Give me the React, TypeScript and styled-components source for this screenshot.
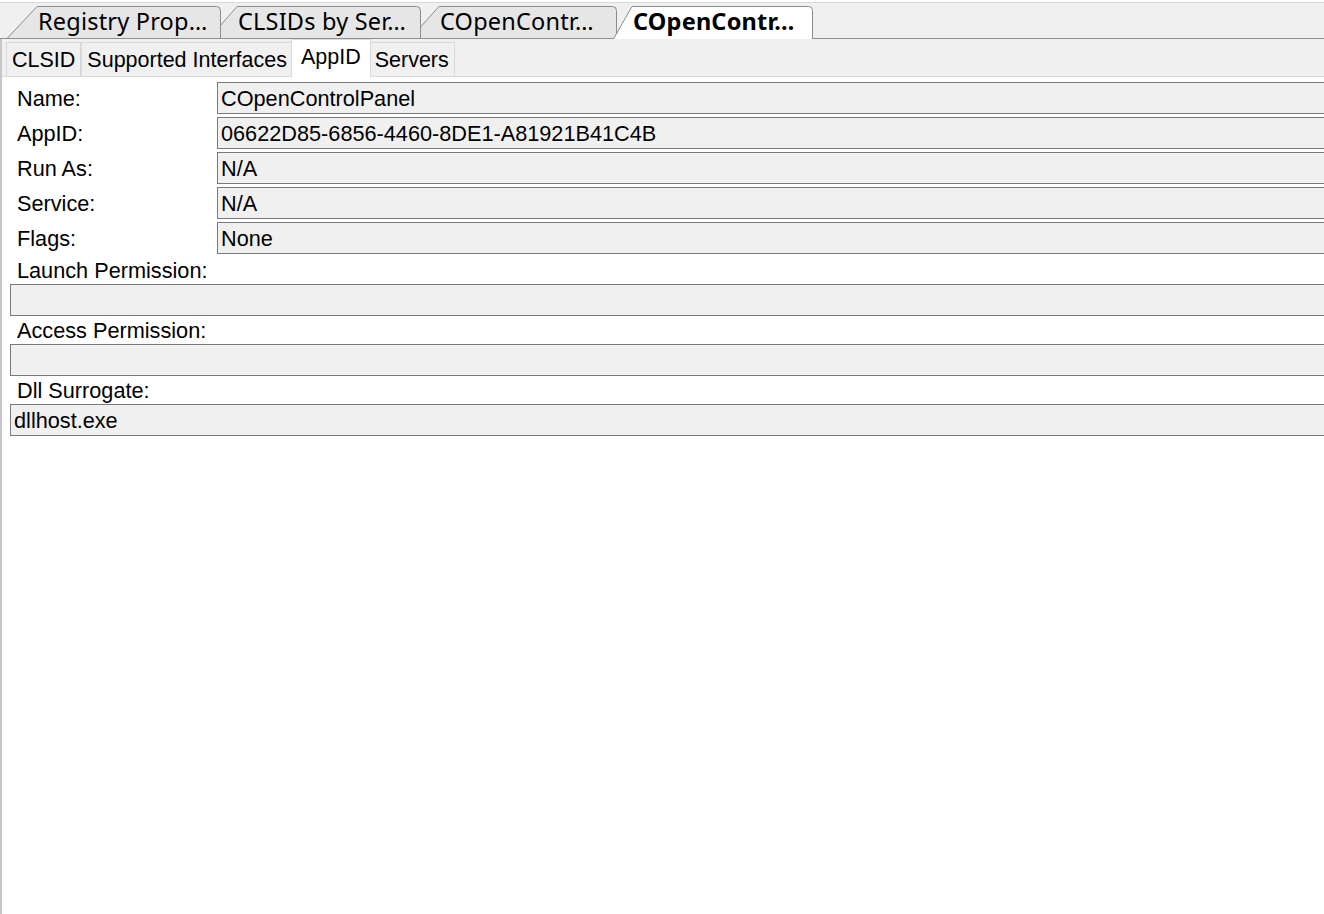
import React from "react";
import styled, { createGlobalStyle } from "styled-components";

const Global = createGlobalStyle`
  html, body, #root { margin: 0; padding: 0; height: 100%; }
  body { background: #ffffff; overflow: hidden; }
  * { box-sizing: border-box; }
`;

const Window = styled.div`
  display: flex;
  flex-direction: column;
  height: 100vh;
  width: 100vw;
  overflow: hidden;
  background: #ffffff;
`;

const TabBar = styled.div`
  margin-top: 2px;
  height: 37px;
  border-top: 1px solid #d9d9d9;
  border-bottom: 1px solid #8f8f8f;
  background: #f0f0f0;
  display: flex;
  align-items: flex-end;
  padding-left: 7px;
`;

const DocTab = styled.div<{ $w: number; $slant: number; $active?: boolean; $z: number; $ml: number }>`
  position: relative;
  flex: none;
  width: ${(p) => p.$w}px;
  height: ${(p) => (p.$active ? 33 : 32)}px;
  margin-bottom: ${(p) => (p.$active ? -1 : 0)}px;
  margin-left: ${(p) => p.$ml}px;
  z-index: ${(p) => p.$z};
  padding-left: ${(p) => p.$slant + 1}px;
  font-family: "Noto Sans", "Open Sans", sans-serif;
  font-size: 23.5px;
  letter-spacing: 0.2px;
  font-weight: ${(p) => (p.$active ? 700 : 400)};
  color: #000;
  line-height: 31px;
  white-space: nowrap;
`;

const TabShape = styled.svg`
  position: absolute;
  left: 0;
  top: 0;
  overflow: visible;
`;

const TabLabel = styled.span`
  position: relative;
  display: block;
`;

const Body = styled.div`
  flex: 1;
  display: flex;
  flex-direction: column;
  border-left: 2px solid #c6c6c6;
  min-height: 0;
`;

const SubTabRow = styled.div`
  height: 38px;
  background: #f0f0f0;
  border-bottom: 1px solid #d9d9d9;
  display: flex;
  align-items: flex-end;
  padding-left: 4px;
`;

const SubTab = styled.div<{ $active?: boolean }>`
  position: relative;
  z-index: ${(p) => (p.$active ? 2 : 1)};
  height: ${(p) => (p.$active ? 38 : 34)}px;
  margin: 0 ${(p) => (p.$active ? -2 : 0)}px ${(p) => (p.$active ? -1 : 0)}px;
  padding: 2px ${(p) => (p.$active ? 9 : 5)}px ${(p) => (p.$active ? 4 : 0)}px;
  background: ${(p) => (p.$active ? "#ffffff" : "#f0f0f0")};
  border: 1px solid #d9d9d9;
  border-bottom: none;
  font-family: "Liberation Sans", Arial, sans-serif;
  font-size: 21.5px;
  color: #000;
  display: flex;
  align-items: center;
  white-space: nowrap;
`;

const Content = styled.div`
  flex: 1;
  background: #ffffff;
  padding-top: 5px;
  overflow: hidden;
  display: flex;
  flex-direction: column;
`;

const PropGrid = styled.div`
  display: grid;
  grid-template-columns: 200px 1fr;
  row-gap: 3px;
  padding-left: 15px;
  margin-right: -20px;
`;

const Label = styled.div<{ $block?: boolean }>`
  font-family: "Liberation Sans", Arial, sans-serif;
  font-size: 21.7px;
  color: #000;
  display: flex;
  align-items: center;
  height: ${(p) => (p.$block ? 28 : 32)}px;
  padding-left: ${(p) => (p.$block ? 15 : 0)}px;
  padding-top: 1px;
  white-space: nowrap;
`;

const Field = styled.div<{ $wide?: boolean }>`
  height: 32px;
  border: 1px solid #7a7a7a;
  background: #f0f0f0;
  font-family: "Liberation Sans", Arial, sans-serif;
  font-size: 21.7px;
  color: #000;
  line-height: 31px;
  padding-left: 3px;
  white-space: nowrap;
  margin-left: ${(p) => (p.$wide ? 8 : 0)}px;
  margin-right: ${(p) => (p.$wide ? -20 : 0)}px;
`;

const Spacer = styled.div<{ $h: number }>`
  height: ${(p) => p.$h}px;
`;

type TabDef = { text: string; w: number; slant: number; ml: number; active?: boolean; z: number };

const tabs: TabDef[] = [
  { text: "Registry Prop…", w: 214, slant: 30, ml: 0, z: 4 },
  { text: "CLSIDs by Ser…", w: 212, slant: 28, ml: -12, z: 3 },
  { text: "COpenContr…", w: 207, slant: 29, ml: -11, z: 2 },
  { text: "COpenContr…", w: 200, slant: 19, ml: -4, z: 5, active: true },
];

function Tab({ t }: { t: TabDef }) {
  const h = t.active ? 33 : 32;
  const w = t.w;
  const r = 4;
  const fillD = `M0.5 ${h} L${t.slant} 0.5 L${w - r - 0.5} 0.5 Q${w - 0.5} 0.5 ${w - 0.5} ${r + 0.5} L${w - 0.5} ${h} Z`;
  const strokeD = `M0.5 ${h} L${t.slant} 0.5 L${w - r - 0.5} 0.5 Q${w - 0.5} 0.5 ${w - 0.5} ${r + 0.5} L${w - 0.5} ${h}`;
  return (
    <DocTab $w={w} $slant={t.slant} $active={t.active} $z={t.z} $ml={t.ml}>
      <TabShape width={w} height={h}>
        <path d={fillD} fill={t.active ? "#ffffff" : "#e6e6e6"} />
        <path d={strokeD} fill="none" stroke="#8c8c8c" strokeWidth={1} />
      </TabShape>
      <TabLabel>{t.text}</TabLabel>
    </DocTab>
  );
}

const props: [string, string][] = [
  ["Name:", "COpenControlPanel"],
  ["AppID:", "06622D85-6856-4460-8DE1-A81921B41C4B"],
  ["Run As:", "N/A"],
  ["Service:", "N/A"],
  ["Flags:", "None"],
];

export default function App() {
  return (
    <Window>
      <Global />
      <TabBar>
        {tabs.map((t, i) => (
          <Tab key={i} t={t} />
        ))}
      </TabBar>
      <Body>
        <SubTabRow>
          <SubTab>CLSID</SubTab>
          <SubTab>Supported Interfaces</SubTab>
          <SubTab $active>AppID</SubTab>
          <SubTab>Servers</SubTab>
        </SubTabRow>
        <Content>
          <PropGrid>
            {props.map(([l, v]) => (
              <React.Fragment key={l}>
                <Label>{l}</Label>
                <Field>{v}</Field>
              </React.Fragment>
            ))}
          </PropGrid>
          <Spacer $h={2} />
          <Label $block>Launch Permission:</Label>
          <Field $wide />
          <Label $block>Access Permission:</Label>
          <Field $wide />
          <Label $block>Dll Surrogate:</Label>
          <Field $wide>dllhost.exe</Field>
        </Content>
      </Body>
    </Window>
  );
}
